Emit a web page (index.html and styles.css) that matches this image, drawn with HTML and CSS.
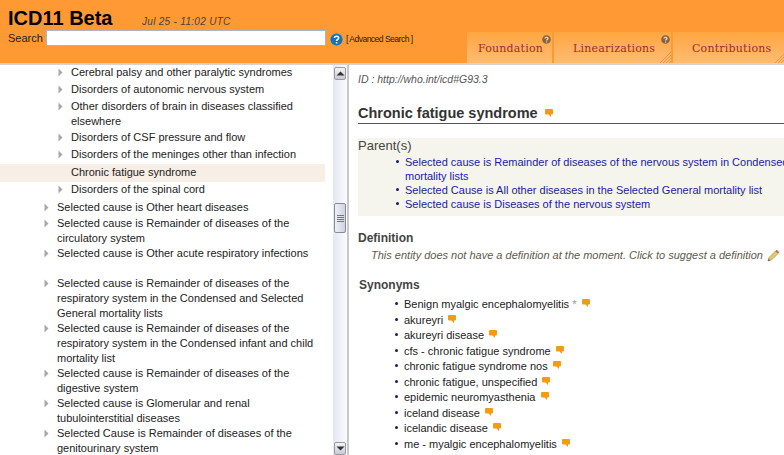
FILE: index.html
```html
<!DOCTYPE html>
<html lang="en">
<head>
<meta charset="utf-8">
<title>ICD11 Beta</title>
<link rel="stylesheet" href="styles.css">
</head>
<body>
<svg class="defs" width="0" height="0" aria-hidden="true">
  <symbol id="bubble" viewBox="0 0 8 8"><path d="M1 0H7Q8 0 8 1V4.500Q8 5.500 7 5.500H6V8L3.500 5.500H1Q0 5.500 0 4.500V1Q0 0 1 0Z" fill="#f39c12"/></symbol>
  <symbol id="arrow" viewBox="0 0 5 9"><path d="M0.500 0.500L4.500 4.500L0.500 8.500Z" fill="#a8a8a8"/></symbol>
  <symbol id="hint" viewBox="0 0 9 9"><circle cx="4.500" cy="4.500" r="4.300" fill="#8c6239"/><path d="M3 3.600C3 1.800 6 1.800 6 3.500C6 4.500 4.600 4.600 4.600 5.600M4.600 6.500V7.500" fill="none" stroke="#f3e5d0" stroke-width="1.200"/></symbol>
  <symbol id="grip" viewBox="0 0 12 12"><path d="M1 12L12 1M4 12L12 4M7 12L12 7M10 12L12 10" stroke="#d9924a" stroke-width="0.800" fill="none"/></symbol>
</svg>
<header class="top">
  <div class="brand">
    <div class="title-row">
      <h1 class="logo">ICD11 Beta</h1>
      <span class="stamp">Jul 25 - 11:02 UTC</span>
    </div>
    <div class="search-row">
      <label class="search-label" for="q">Search</label>
      <input class="search-input" id="q" type="text">
      <svg class="help" viewBox="0 0 14 14" width="13" height="13"><circle cx="7" cy="7" r="6.500" fill="#0e73c4"/><path d="M4.800 5.400C4.800 2.900 9.300 2.900 9.300 5.300C9.300 6.900 7.100 6.900 7.100 8.500M7.100 9.800V11.300" fill="none" stroke="#fff" stroke-width="1.700"/></svg>
      <span class="adv">[ Advanced Search ]</span>
    </div>
  </div>
  <nav class="tabs">
    <div class="tab tab-f">Foundation<svg class="tab-hint"><use href="#hint"/></svg></div>
    <div class="tab tab-l">Linearizations<svg class="tab-hint"><use href="#hint"/></svg><svg class="tab-grip"><use href="#grip"/></svg></div>
    <div class="tab tab-c">Contributions<svg class="tab-grip"><use href="#grip"/></svg></div>
  </nav>
</header>
<main class="main">
  <div class="tree">
    <ul class="list">
      <li class="n n2"><svg class="ar"><use href="#arrow"/></svg>Cerebral palsy and other paralytic syndromes</li>
      <li class="n n2"><svg class="ar"><use href="#arrow"/></svg>Disorders of autonomic nervous system</li>
      <li class="n n2 tight"><svg class="ar"><use href="#arrow"/></svg>Other disorders of brain in diseases classified elsewhere</li>
      <li class="n n2"><svg class="ar"><use href="#arrow"/></svg>Disorders of CSF pressure and flow</li>
      <li class="n n2"><svg class="ar"><use href="#arrow"/></svg>Disorders of the meninges other than infection</li>
      <li class="n n2 sel">Chronic fatigue syndrome</li>
      <li class="n n2 last"><svg class="ar"><use href="#arrow"/></svg>Disorders of the spinal cord</li>
      <li class="n n1 tight"><svg class="ar"><use href="#arrow"/></svg>Selected cause is Other heart diseases</li>
      <li class="n n1"><svg class="ar"><use href="#arrow"/></svg>Selected cause is Remainder of diseases of the circulatory system</li>
      <li class="n n1 gap"><svg class="ar"><use href="#arrow"/></svg>Selected cause is Other acute respiratory infections</li>
      <li class="n n1"><svg class="ar"><use href="#arrow"/></svg>Selected cause is Remainder of diseases of the respiratory system in the Condensed and Selected General mortality lists</li>
      <li class="n n1"><svg class="ar"><use href="#arrow"/></svg>Selected cause is Remainder of diseases of the respiratory system in the Condensed infant and child mortality list</li>
      <li class="n n1"><svg class="ar"><use href="#arrow"/></svg>Selected cause is Remainder of diseases of the digestive system</li>
      <li class="n n1"><svg class="ar"><use href="#arrow"/></svg>Selected cause is Glomerular and renal tubulointerstitial diseases</li>
      <li class="n n1"><svg class="ar"><use href="#arrow"/></svg>Selected Cause is Remainder of diseases of the genitourinary system</li>
    </ul>
  </div>
  <div class="scroll">
    <div class="sb-btn"><svg viewBox="0 0 9 5" width="9" height="5"><path d="M0.500 4.500L4.500 0.500L8.500 4.500Z" fill="#333"/></svg></div>
    <div class="sb-thumb"><span class="grip-line"></span><span class="grip-line"></span><span class="grip-line"></span><span class="grip-line"></span></div>
    <div class="sb-btn sb-down"><svg viewBox="0 0 9 5" width="9" height="5"><path d="M0.500 0.500L4.500 4.500L8.500 0.500Z" fill="#333"/></svg></div>
  </div>
  <div class="divider"></div>
  <section class="detail">
    <p class="id">ID : http://who.int/icd#G93.3</p>
    <h2 class="name">Chronic fatigue syndrome <svg class="bub"><use href="#bubble"/></svg></h2>
    <div class="parents">
      <h3 class="parents-h">Parent(s)</h3>
      <ul class="plist">
        <li>Selected cause is Remainder of diseases of the nervous system in Condensed and Selected General mortality lists</li>
        <li>Selected Cause is All other diseases in the Selected General mortality list</li>
        <li>Selected cause is Diseases of the nervous system</li>
      </ul>
    </div>
    <h3 class="sec">Definition</h3>
    <p class="def">This entity does not have a definition at the moment. Click to suggest a definition <svg class="pencil" viewBox="0 0 13 13" width="13" height="13"><path d="M2 8.500L8.500 2L11 4.500L4.500 11L1 12Z" fill="#e6c76a" stroke="#a08a50" stroke-width="0.600"/><path d="M8.500 2L9.800 0.800L12.200 3.200L11 4.500Z" fill="#d8574a"/><path d="M1 12L1.700 9.800L3.200 11.300Z" fill="#555"/></svg></p>
    <h3 class="sec syn-h">Synonyms</h3>
    <ul class="syn">
      <li>Benign myalgic encephalomyelitis <span class="star">*</span> <svg class="bub"><use href="#bubble"/></svg></li>
      <li>akureyri <svg class="bub"><use href="#bubble"/></svg></li>
      <li>akureyri disease <svg class="bub"><use href="#bubble"/></svg></li>
      <li>cfs - chronic fatigue syndrome <svg class="bub"><use href="#bubble"/></svg></li>
      <li>chronic fatigue syndrome nos <svg class="bub"><use href="#bubble"/></svg></li>
      <li>chronic fatigue, unspecified <svg class="bub"><use href="#bubble"/></svg></li>
      <li>epidemic neuromyasthenia <svg class="bub"><use href="#bubble"/></svg></li>
      <li>iceland disease <svg class="bub"><use href="#bubble"/></svg></li>
      <li>icelandic disease <svg class="bub"><use href="#bubble"/></svg></li>
      <li>me - myalgic encephalomyelitis <svg class="bub"><use href="#bubble"/></svg></li>
    </ul>
  </section>
</main>
</body>
</html>
```
FILE: styles.css
```css
* { box-sizing: border-box; }
html, body { margin: 0; padding: 0; height: 455px; overflow: hidden; background: #fff; }
body { font-family: "Liberation Sans", Arial, sans-serif; font-size: 11px; color: #222; display: flex; flex-direction: column; }
.defs { position: absolute; }
ul { list-style: none; margin: 0; padding: 0; }
h1, h2, h3, p { margin: 0; }

.top { height: 65px; flex: none; background: #ff9933; border-bottom: 2px solid #d4d4d4; display: flex; justify-content: space-between; overflow: hidden; }
.brand { padding: 7px 0 0 8px; }
.title-row { display: flex; align-items: baseline; height: 23px; }
.logo { font-size: 20px; font-weight: bold; line-height: 23px; color: #000; width: 134px; }
.stamp { font-size: 10px; font-style: italic; color: #444; letter-spacing: 0.300px; }
.search-row { display: flex; align-items: center; height: 16px; }
.search-label { font-size: 11px; color: #222; width: 38px; }
.search-input { width: 280px; height: 16px; border: 1px solid #a9b5c9; background: #fff; padding: 0; margin: 0 4px 0 0; }
.help { flex: none; margin-top: 3px; }
.adv { font-size: 8.500px; color: #222; margin-left: 3px; margin-top: 2px; letter-spacing: -0.500px; }

.tabs { display: flex; align-self: flex-end; gap: 2px; width: 317px; flex: none; height: 31px; }
.tab { position: relative; height: 31px; flex: none; background: linear-gradient(#ffa640, #ffbb75); color: #a52a2a; font-family: "DejaVu Serif", serif; font-size: 11px; line-height: 31px; padding-top: 1px; letter-spacing: 0.200px; }
.tab-f { width: 85px; padding-left: 11px; }
.tab-l { width: 117px; padding-left: 19px; }
.tab-c { width: 113px; padding-left: 19px; }
.tab-hint { position: absolute; top: 3px; right: 1px; width: 9px; height: 9px; }
.tab-grip { position: absolute; right: 0; bottom: 0; width: 12px; height: 12px; }

.main { flex: 1; display: flex; min-height: 0; }
.tree { width: 333px; flex: none; overflow: hidden; }
.list { width: 325px; }
.n { position: relative; line-height: 15px; padding-right: 6px; font-size: 11px; color: #222; }
.n2 { padding-left: 71px; padding-bottom: 2px; }
.n1 { padding-left: 57px; }
.ar { position: absolute; width: 5px; height: 9px; top: 3px; }
.n2 .ar { left: 58px; }
.n1 .ar { left: 44px; }
.n2.tight { padding-bottom: 1px; }
.n2.last { padding-bottom: 3px; }
.n1.tight { padding-bottom: 1px; }
.sel { background: #f7eee6; padding-top: 1px; }
.gap { padding-bottom: 15px; }

.scroll { width: 14px; flex: none; background: linear-gradient(90deg, #e4e6f2, #fbfbfe); display: flex; flex-direction: column; align-items: center; }
.sb-btn { width: 12px; height: 13px; margin-top: 2px; border: 1px solid #9a9aa5; border-radius: 2px; background: linear-gradient(#f5f5f5, #c9c9d4); display: flex; align-items: center; justify-content: center; flex: none; }
.sb-thumb { width: 12px; height: 30px; margin-top: 123px; border: 1px solid #8a8a95; border-radius: 2px; background: linear-gradient(90deg, #eef0f6, #cfd3e2); display: flex; flex-direction: column; align-items: center; justify-content: center; gap: 1px; flex: none; }
.grip-line { width: 7px; height: 1px; background: #777; }
.sb-down { margin-top: auto; }
.divider { width: 2px; flex: none; background: #c8c8c8; }

.detail { flex: 1; min-width: 0; overflow: hidden; padding: 8px 0 0 9px; }
.id { font-size: 10.500px; font-style: italic; color: #555; line-height: 12px; height: 12px; white-space: nowrap; }
.name { font-size: 14.500px; font-weight: bold; color: #333; line-height: 17px; margin-top: 20px; padding-bottom: 1px; border-bottom: 1px solid #555; width: 560px; height: 19px; white-space: nowrap; }
.name .bub { margin-left: 3px; }
.bub { width: 8px; height: 8px; vertical-align: 1px; margin-left: 2px; }
.parents { margin-top: 14px; background: #f5f5ee; width: 560px; height: 78px; padding-top: 1px; }
.parents-h { font-size: 13px; font-weight: normal; color: #444; line-height: 14px; }
.plist { margin-top: 2px; padding-left: 47px; width: 577px; }
.plist li, .syn li { position: relative; }
.plist li { color: #1a1aa6; line-height: 14px; }
.plist li::before, .syn li::before { content: ""; position: absolute; left: -9px; top: 5px; width: 3px; height: 3px; border-radius: 50%; background: #1a1a66; }
.sec { font-size: 12px; font-weight: bold; color: #444; line-height: 14px; margin-top: 15px; }
.def { font-style: italic; color: #5f5a4a; padding-left: 13px; line-height: 14px; margin-top: 3px; white-space: nowrap; }
.pencil { vertical-align: -3px; margin-left: 1px; }
.syn-h { margin-top: 16px; margin-left: 1px; }
.syn { margin-top: 5px; padding-left: 46px; }
.syn li { line-height: 15.500px; color: #222; white-space: nowrap; }
.star { color: #8a94a8; }
```
